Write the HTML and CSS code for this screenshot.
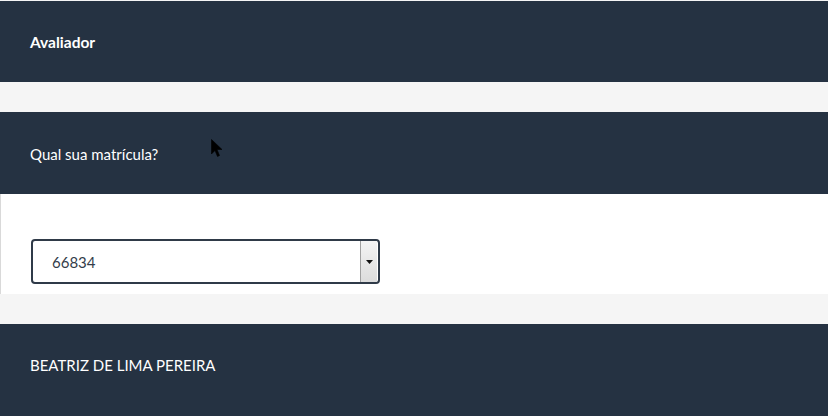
FILE: index.html
```html
<!DOCTYPE html>
<html lang="pt">
<head>
<meta charset="utf-8">
<title>Avaliador</title>
<link rel="stylesheet" href="styles.css">
</head>
<body>
<div class="page">
  <div class="bar bar-top"><span class="title">Avaliador</span></div>
  <div class="gap"></div>
  <div class="bar bar-q"><span class="label">Qual sua matrícula?</span></div>
  <div class="panel">
    <div class="select">
      <span class="value">66834</span>
      <span class="arrow"><svg width="7" height="4" viewBox="0 0 7 4"><polygon points="0,0 7,0 3.5,4" fill="#111"/></svg></span>
    </div>
  </div>
  <div class="gap"></div>
  <div class="bar bar-name"><span class="name">BEATRIZ DE LIMA PEREIRA</span></div>
  <svg class="cursor" width="12" height="19" viewBox="0 0 12 19"><path d="M0.5 0.5 L0.5 15 L4 11.5 L6.5 17.5 L8.5 16.5 L6 10.5 L11 10.5 Z" fill="#000" stroke="#000" stroke-width="0.6"/></svg>
</div>
</body>
</html>
```

FILE: styles.css
```css
html, body {
  margin: 0;
  padding: 0;
}
body {
  background: #f5f5f5;
  font-family: Lato, "Open Sans", "Liberation Sans", sans-serif;
  color: #fff;
}
.page {
  position: relative;
  padding-top: 1px;
  height: 415px;
  overflow: hidden;
}
.bar {
  background: #253242;
  display: flex;
  align-items: center;
  padding-left: 30px;
}
.bar-top {
  height: 81px;
}
.bar-q {
  height: 82px;
}
.bar-name {
  height: 84px;
  align-items: flex-start;
  padding-top: 32px;
}
.gap {
  height: 30px;
}
.title {
  font-weight: 700;
  font-size: 15.5px;
}
.label {
  font-size: 15px;
  margin-top: 1px;
}
.name {
  font-size: 15px;
}
.panel {
  background: #fff;
  height: 100px;
  border-left: 1px solid #d9d9d9;
  padding-left: 30px;
  padding-top: 45px;
  box-sizing: border-box;
}
.select {
  width: 349px;
  height: 45px;
  box-sizing: border-box;
  border: 2px solid #2f3a48;
  border-radius: 4px;
  display: flex;
  align-items: center;
  justify-content: space-between;
  background: #fff;
}
.value {
  color: #333d4a;
  font-size: 15px;
  padding-left: 19px;
}
.arrow {
  width: 17px;
  height: 41px;
  box-sizing: border-box;
  border-left: 1px solid #a0a0a0;
  background: linear-gradient(#f4f4f4, #dcdcdc);
  display: flex;
  align-items: center;
  justify-content: center;
  margin-right: 1px;
}
.cursor {
  position: absolute;
  left: 211px;
  top: 139px;
}
```
